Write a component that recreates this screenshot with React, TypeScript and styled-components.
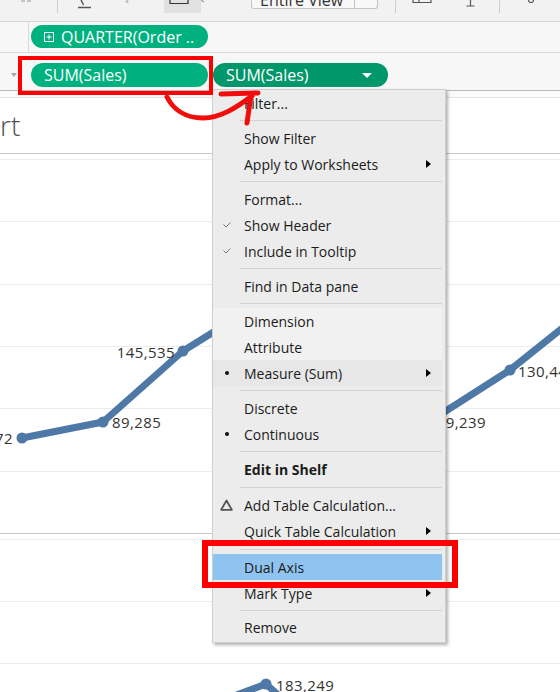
import styled, { createGlobalStyle } from 'styled-components';

const BLUE = '#4e79a7';

type Tone = 'plain' | 'soft' | 'hover' | 'selected';
type Mark = 'check' | 'dot' | 'delta';

type MenuEntry =
  | { kind: 'item'; label: string; mark?: Mark; sub?: boolean; bold?: boolean; tone?: Tone }
  | { kind: 'sep'; h: number };

const menuEntries: MenuEntry[] = [
  { kind: 'item', label: 'Filter...' },
  { kind: 'sep', h: 9 },
  { kind: 'item', label: 'Show Filter' },
  { kind: 'item', label: 'Apply to Worksheets', sub: true },
  { kind: 'sep', h: 9 },
  { kind: 'item', label: 'Format...' },
  { kind: 'item', label: 'Show Header', mark: 'check' },
  { kind: 'item', label: 'Include in Tooltip', mark: 'check' },
  { kind: 'sep', h: 9 },
  { kind: 'item', label: 'Find in Data pane' },
  { kind: 'sep', h: 9 },
  { kind: 'item', label: 'Dimension', tone: 'soft' },
  { kind: 'item', label: 'Attribute', tone: 'soft' },
  { kind: 'item', label: 'Measure (Sum)', mark: 'dot', sub: true, tone: 'hover' },
  { kind: 'sep', h: 9 },
  { kind: 'item', label: 'Discrete' },
  { kind: 'item', label: 'Continuous', mark: 'dot' },
  { kind: 'sep', h: 9 },
  { kind: 'item', label: 'Edit in Shelf', bold: true },
  { kind: 'sep', h: 10 },
  { kind: 'item', label: 'Add Table Calculation...', mark: 'delta' },
  { kind: 'item', label: 'Quick Table Calculation', sub: true },
  { kind: 'sep', h: 10 },
  { kind: 'item', label: 'Dual Axis', tone: 'selected' },
  { kind: 'item', label: 'Mark Type', sub: true },
  { kind: 'sep', h: 8 },
  { kind: 'item', label: 'Remove' },
];

// chart data, coordinates inside each pane
const topGrid = [5, 67, 130, 192, 254, 317];
const bottomGrid = [5, 67, 129];
const topPoints: [number, number][] = [
  [22, 284], [103, 268], [183, 197], [265, 146], [345, 206], [438, 262], [510, 216], [600, 144],
];
const bottomPoints: [number, number][] = [[170, 186], [266, 150], [350, 226]];

export default function App() {
  return (
    <>
      <GlobalStyle />
      <Page>
        <Toolbar>
          <TbIcon $ml={20} width="12" height="4">
            <path d="M1 1H5M7 1H11" stroke="#9a9a9a" strokeWidth="1.2" />
          </TbIcon>
          <ToolSep $ml={25} />
          <TbIcon $ml={20} width="13" height="9">
            <path d="M3 0L5.5 5" stroke="#444" strokeWidth="1.3" />
            <path d="M0 7.5H13" stroke="#555" strokeWidth="1.5" />
          </TbIcon>
          <TbIcon $ml={34} width="4" height="4">
            <circle cx="2" cy="1.5" r="1.5" fill="#bdbdbd" />
          </TbIcon>
          <ToolPressed>
            <svg width="37" height="6">
              <path d="M6 0V3.5H24V0" stroke="#333" strokeWidth="1.2" fill="none" />
            </svg>
          </ToolPressed>
          <TbIcon $ml={0} width="6" height="4">
            <path d="M0 0L3 2" stroke="#999" strokeWidth="1.2" />
          </TbIcon>
          <ViewSelect>
            <ViewText>Entire View</ViewText>
            <ViewCaret />
          </ViewSelect>
          <ToolSep $ml={17} />
          <TbIcon $ml={16} width="20" height="4">
            <path d="M1 0V2.5H19V0M7 2.5V0" stroke="#555" strokeWidth="1.2" fill="none" />
          </TbIcon>
          <TbIcon $ml={34} width="9" height="7">
            <path d="M4.5 0V6M0.5 6H8.5" stroke="#555" strokeWidth="1.2" />
          </TbIcon>
          <ToolSep $ml={24} />
          <TbIcon $ml={28} width="6" height="4">
            <path d="M0.5 0A2.5 2.5 0 0 0 5.5 0" stroke="#555" strokeWidth="1.2" fill="none" />
          </TbIcon>
        </Toolbar>

        <ShelfRow $h={30}>
          <ShelfLabel $divider />
          <ShelfPills $top={3}>
            <Pill $w={177} $h={23}>
              <PlusBox width="10" height="10">
                <rect x="0.5" y="0.5" width="9" height="9" fill="none" stroke="#fff" />
                <path d="M2.5 5H7.5M5 2.5V7.5" stroke="#fff" />
              </PlusBox>
              QUARTER(Order ..
            </Pill>
          </ShelfPills>
        </ShelfRow>

        <ShelfRow $h={37} $line="#b9b9b9">
          <ShelfLabel>
            <DownTri />
          </ShelfLabel>
          <ShelfPills $top={10}>
            <Pill $w={177} $h={24}>SUM(Sales)</Pill>
            <Pill $w={175} $h={24} $active>
              SUM(Sales)
              <PillCaret />
            </Pill>
          </ShelfPills>
        </ShelfRow>

        <Strip />

        <Canvas>
          <TitleBar>rt</TitleBar>
          <Pane $h={379}>
            <ChartSvg width="560" height="379">
              {topGrid.map(y => (
                <line key={y} x1="0" x2="560" y1={y + 0.5} y2={y + 0.5} stroke="#ececec" />
              ))}
              <polyline
                points={topPoints.map(p => p.join(',')).join(' ')}
                fill="none"
                stroke={BLUE}
                strokeWidth="7"
                strokeLinejoin="round"
                strokeLinecap="round"
              />
              {topPoints.map(([x, y]) => (
                <circle key={x} cx={x} cy={y} r="5.5" fill={BLUE} />
              ))}
              <text x="13" y="284" textAnchor="end" dominantBaseline="central">74,372</text>
              <text x="112" y="268" dominantBaseline="central">89,285</text>
              <text x="175" y="198" textAnchor="end" dominantBaseline="central">145,535</text>
              <text x="486" y="268" textAnchor="end" dominantBaseline="central">139,239</text>
              <text x="518" y="217" dominantBaseline="central">130,448</text>
            </ChartSvg>
          </Pane>
          <Pane>
            <ChartSvg width="560" height="158">
              {bottomGrid.map(y => (
                <line key={y} x1="0" x2="560" y1={y + 0.5} y2={y + 0.5} stroke="#ececec" />
              ))}
              <polyline
                points={bottomPoints.map(p => p.join(',')).join(' ')}
                fill="none"
                stroke={BLUE}
                strokeWidth="7"
                strokeLinejoin="round"
                strokeLinecap="round"
              />
              {bottomPoints.map(([x, y]) => (
                <circle key={x} cx={x} cy={y} r="5.5" fill={BLUE} />
              ))}
              <text x="276" y="151" dominantBaseline="central">183,249</text>
            </ChartSvg>
          </Pane>
        </Canvas>

        <Menu>
          {menuEntries.map((e, i) =>
            e.kind === 'sep' ? (
              <MenuSep key={i} $h={e.h} />
            ) : (
              <MenuItem key={i} $tone={e.tone ?? 'plain'}>
                <MarkCell>
                  {e.mark === 'check' && (
                    <svg width="8" height="6">
                      <polyline points="0.5,2.5 3,5 7.5,0.5" fill="none" stroke="#777" strokeWidth="1" />
                    </svg>
                  )}
                  {e.mark === 'dot' && <Bullet />}
                  {e.mark === 'delta' && (
                    <svg width="13" height="12">
                      <polygon points="6.5,1.5 11.8,10.8 1.2,10.8" fill="none" stroke="#555" strokeWidth="1.8" strokeLinejoin="round" />
                    </svg>
                  )}
                </MarkCell>
                <ItemLabel $bold={e.bold}>{e.label}</ItemLabel>
                {e.sub && <SubArrow />}
              </MenuItem>
            )
          )}
        </Menu>

        <PillMarker />
        <DualMarker />
        <ArrowMark width="110" height="45">
          <g fill="none" stroke="#f20d0d" strokeWidth="5" strokeLinecap="round" strokeLinejoin="round">
            <path d="M12 12C18 24 30 33 48 33C66 33 82 22 97 11" />
            <path d="M66 9L103 8" />
            <path d="M96 10L92 38" />
          </g>
        </ArrowMark>
      </Page>
    </>
  );
}

const GlobalStyle = createGlobalStyle`
  html, body {
    margin: 0;
    padding: 0;
    background: #ffffff;
  }
  body {
    font-family: 'Open Sans', 'Noto Sans', sans-serif;
  }
`;

const Page = styled.div`
  position: relative;
  width: 560px;
  height: 692px;
  overflow: hidden;
  display: flex;
  flex-direction: column;
  background: #ffffff;
`;

const Toolbar = styled.div`
  flex: none;
  height: 21px;
  border-bottom: 1px solid #d6d6d6;
  background: #f2f2f2;
  display: flex;
  align-items: flex-start;
  overflow: hidden;
`;

const TbIcon = styled.svg<{ $ml: number }>`
  display: block;
  flex: none;
  margin-left: ${p => p.$ml}px;
`;

const ToolSep = styled.div<{ $ml: number }>`
  flex: none;
  width: 1px;
  height: 13px;
  margin-left: ${p => p.$ml}px;
  background: #cdcdcd;
`;

const ToolPressed = styled.div`
  flex: none;
  width: 37px;
  height: 13px;
  margin-left: 35px;
  background: #e1e1e1;
  svg {
    display: block;
  }
`;

const ViewSelect = styled.div`
  flex: none;
  margin-left: 44px;
  width: 127px;
  height: 9px;
  box-sizing: border-box;
  border: 1px solid #c4c4c4;
  border-top: none;
  border-radius: 0 0 3px 3px;
  background: #f8f8f8;
  display: flex;
  overflow: hidden;
`;

const ViewText = styled.span`
  flex: 1;
  padding-left: 8px;
  margin-top: -8px;
  font-size: 16px;
  line-height: 16px;
  color: #333;
  white-space: nowrap;
`;

const ViewCaret = styled.span`
  width: 22px;
  border-left: 1px solid #c4c4c4;
`;

const ShelfRow = styled.div<{ $h: number; $line?: string }>`
  flex: none;
  height: ${p => p.$h}px;
  display: flex;
  background: #f7f7f7;
  border-bottom: 1px solid ${p => p.$line ?? '#d9d9d9'};
`;

const ShelfLabel = styled.div<{ $divider?: boolean }>`
  flex: none;
  width: 29px;
  box-sizing: border-box;
  padding-top: 6px;
  display: flex;
  align-items: center;
  justify-content: center;
  border-right: 1px solid ${p => (p.$divider ? '#d9d9d9' : 'transparent')};
`;

const DownTri = styled.span`
  width: 0;
  height: 0;
  border-left: 3px solid transparent;
  border-right: 3px solid transparent;
  border-top: 4px solid #a5a5a5;
`;

const ShelfPills = styled.div<{ $top: number }>`
  display: flex;
  align-items: flex-start;
  gap: 5px;
  padding: ${p => p.$top}px 0 0 2px;
`;

const Pill = styled.div<{ $w: number; $h: number; $active?: boolean }>`
  flex: none;
  width: ${p => p.$w}px;
  height: ${p => p.$h}px;
  box-sizing: border-box;
  padding: 0 16px 0 13px;
  border-radius: ${p => p.$h / 2}px;
  background: ${p => (p.$active ? '#00976a' : '#00b180')};
  color: #ffffff;
  font-size: 16px;
  display: flex;
  align-items: center;
  white-space: nowrap;
`;

const PlusBox = styled.svg`
  display: block;
  flex: none;
  margin-right: 7px;
`;

const PillCaret = styled.span`
  margin-left: auto;
  width: 0;
  height: 0;
  border-left: 5px solid transparent;
  border-right: 5px solid transparent;
  border-top: 5px solid #ffffff;
`;

const Strip = styled.div`
  flex: none;
  height: 6px;
  background: #fbfbfb;
  border-bottom: 1px solid #e6e6e6;
`;

const Canvas = styled.div`
  flex: 1;
  display: flex;
  flex-direction: column;
  background: #ffffff;
`;

const TitleBar = styled.div`
  flex: none;
  height: 55px;
  box-sizing: border-box;
  padding-top: 13px;
  font-size: 28px;
  line-height: 28px;
  font-weight: 300;
  color: #4f4f4f;
`;

const Pane = styled.div<{ $h?: number }>`
  flex: ${p => (p.$h ? 'none' : '1')};
  height: ${p => (p.$h ? `${p.$h}px` : 'auto')};
  border-top: 1px solid #c9c9c9;
  overflow: hidden;
`;

const ChartSvg = styled.svg`
  display: block;
  text {
    font-family: 'Open Sans', 'Noto Sans', sans-serif;
    font-size: 15px;
    letter-spacing: 0.4px;
    fill: #333333;
  }
`;

const Menu = styled.div`
  position: absolute;
  left: 212px;
  top: 89px;
  width: 234px;
  box-sizing: border-box;
  padding: 0 3px 2px 0;
  background: #ececec;
  border: 1px solid #cfcfcf;
  box-shadow: 2px 2px 3px rgba(0, 0, 0, 0.3);
  font-size: 14px;
  color: #1b1b1b;
`;

const toneBg: Record<Tone, string> = {
  plain: 'transparent',
  soft: '#f1f1f1',
  hover: '#e7e7e7',
  selected: '#90c4f0',
};

const MenuItem = styled.div<{ $tone: Tone }>`
  height: 26px;
  display: flex;
  align-items: center;
  background: ${p => toneBg[p.$tone]};
  white-space: nowrap;
`;

const MarkCell = styled.span`
  flex: none;
  width: 27px;
  display: flex;
  align-items: center;
  justify-content: center;
  svg {
    display: block;
  }
`;

const Bullet = styled.span`
  width: 4px;
  height: 4px;
  border-radius: 50%;
  background: #111;
`;

const ItemLabel = styled.span<{ $bold?: boolean }>`
  flex: 1;
  padding-left: 4px;
  font-weight: ${p => (p.$bold ? 700 : 400)};
`;

const SubArrow = styled.span`
  width: 0;
  height: 0;
  margin-right: 11px;
  border-top: 4px solid transparent;
  border-bottom: 4px solid transparent;
  border-left: 5px solid #000;
`;

const MenuSep = styled.div<{ $h: number }>`
  height: ${p => p.$h}px;
  display: flex;
  align-items: center;
  padding-left: 27px;
  &::after {
    content: '';
    flex: 1;
    height: 1px;
    background: #d2d2d2;
  }
`;

const PillMarker = styled.div`
  position: absolute;
  left: 18px;
  top: 56px;
  width: 195px;
  height: 39px;
  box-sizing: border-box;
  border: 4px solid #ff0000;
`;

const DualMarker = styled.div`
  position: absolute;
  left: 202px;
  top: 540px;
  width: 256px;
  height: 48px;
  box-sizing: border-box;
  border: 6px solid #ff0000;
`;

const ArrowMark = styled.svg`
  position: absolute;
  left: 155px;
  top: 85px;
  display: block;
`;
